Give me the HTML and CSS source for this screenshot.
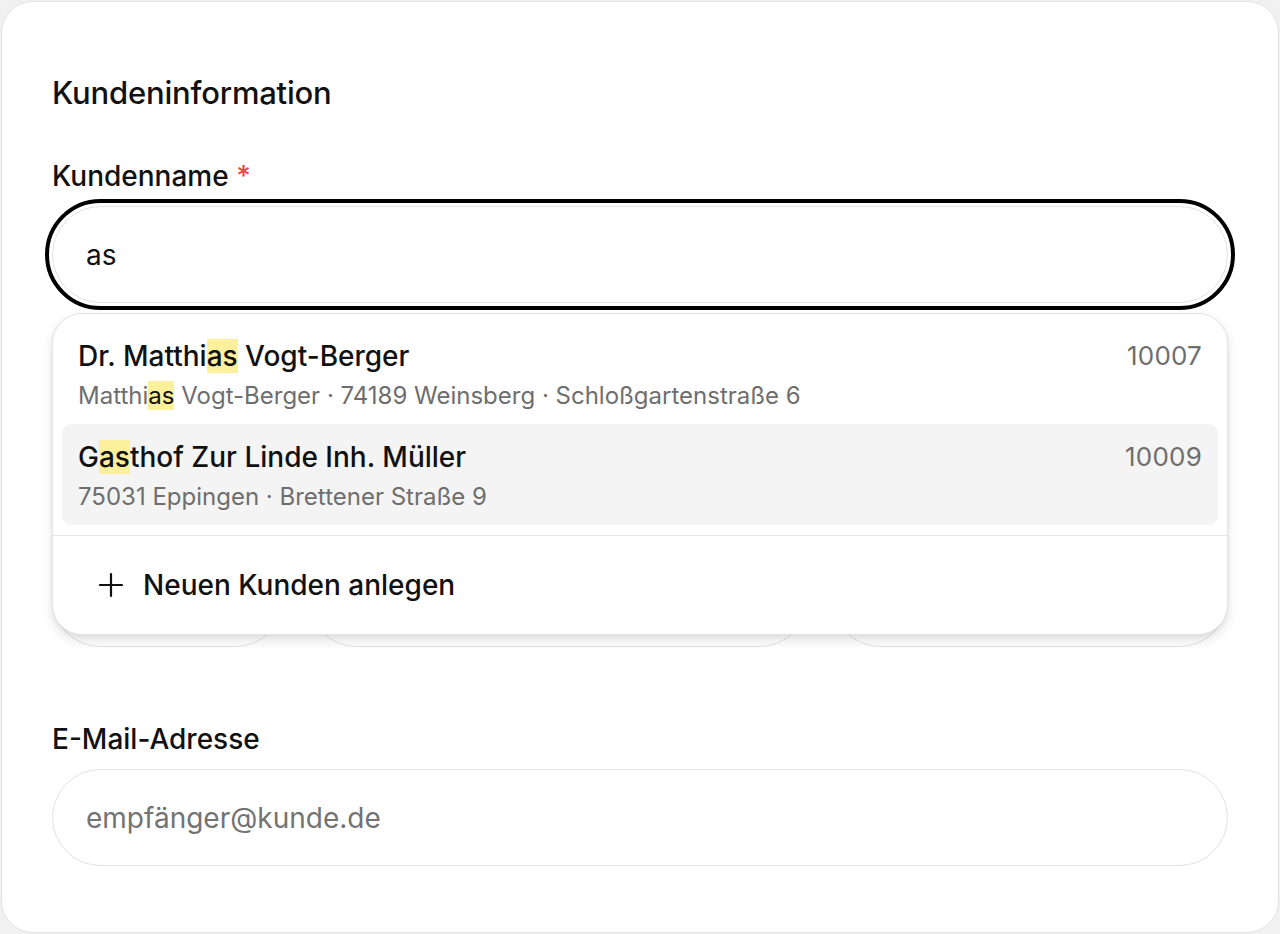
FILE: index.html
```html
<!DOCTYPE html>
<html lang="de">
<head>
<meta charset="utf-8">
<title>Kundeninformation</title>
<link rel="stylesheet" href="styles.css">
</head>
<body>
<div class="card">
  <h2 class="title">Kundeninformation</h2>

  <div class="field field-name">
    <label class="label">Kundenname <span class="req">*</span></label>
    <div class="input input-focus">as</div>

    <div class="dropdown">
      <div class="list">
        <div class="item">
          <div class="item-main">
            <div class="item-title">Dr. Matthi<mark>as</mark> Vogt-Berger</div>
            <div class="item-sub">Matthi<mark>as</mark> Vogt-Berger · 74189 Weinsberg · Schloßgartenstraße 6</div>
          </div>
          <div class="item-num">10007</div>
        </div>
        <div class="item item-active">
          <div class="item-main">
            <div class="item-title">G<mark>as</mark>thof Zur Linde Inh. Müller</div>
            <div class="item-sub">75031 Eppingen · Brettener Straße 9</div>
          </div>
          <div class="item-num">10009</div>
        </div>
      </div>
      <div class="dd-footer">
        <svg class="plus" width="26" height="26" viewBox="0 0 26 26" aria-hidden="true">
          <path d="M13 2v22M2 13h22" stroke="#111" stroke-width="2.2" fill="none" stroke-linecap="round"/>
        </svg>
        <span>Neuen Kunden anlegen</span>
      </div>
    </div>
  </div>

  <div class="row">
    <div class="field">
      <div class="label-space"></div>
      <div class="input"></div>
    </div>
    <div class="field">
      <div class="label-space"></div>
      <div class="input"></div>
    </div>
    <div class="field">
      <div class="label-space"></div>
      <div class="input"></div>
    </div>
  </div>

  <div class="field field-email">
    <label class="label">E-Mail-Adresse</label>
    <div class="input placeholder">empfänger@kunde.de</div>
  </div>
</div>
</body>
</html>
```

FILE: styles.css
```css
* { box-sizing: border-box; }

html, body {
  margin: 0;
  padding: 0;
}

body {
  background: #f1f1f1;
  padding: 1px;
  font-family: Inter, "Noto Sans", "Liberation Sans", sans-serif;
  color: #111;
}

.card {
  background: #fff;
  border: 1.5px solid #e3e3e3;
  border-radius: 32px;
  height: 932px;
  padding: 71px 50px 60px;
  display: flex;
  flex-direction: column;
}

.title {
  margin: 0;
  font-size: 31px;
  line-height: 40px;
  font-weight: 500;
  letter-spacing: -0.2px;
}

.field {
  display: flex;
  flex-direction: column;
  gap: 12px;
}

.field-name {
  position: relative;
  margin-top: 45px;
  z-index: 2;
}

.label {
  font-size: 28px;
  line-height: 36px;
  font-weight: 500;
}

.label-space {
  height: 36px;
}

.req {
  color: #ef4444;
}

.input {
  height: 97px;
  border: 1.5px solid #e2e2e2;
  border-radius: 999px;
  padding: 0 33px;
  display: flex;
  align-items: center;
  font-size: 28px;
  color: #111;
  background: #fff;
}

.input-focus {
  outline: 4px solid #000;
  outline-offset: 3px;
}

.placeholder {
  color: #737373;
}

.row {
  margin-top: 199px;
  display: grid;
  grid-template-columns: 232px 500px 1fr;
  gap: 24px;
}

.field-email {
  margin-top: 74px;
}

/* dropdown */
.dropdown {
  position: absolute;
  top: calc(100% + 10px);
  left: 0;
  right: 0;
  height: 322px;
  background: #fff;
  border: 1.5px solid #e4e4e4;
  border-radius: 30px;
  box-shadow: 0 6px 12px rgba(0, 0, 0, 0.10), 0 2px 4px rgba(0, 0, 0, 0.05);
  display: flex;
  flex-direction: column;
}

.list {
  padding: 9px 9px 10px;
  border-bottom: 1.5px solid #e6e6e6;
}

.item {
  display: flex;
  justify-content: space-between;
  align-items: flex-start;
  padding: 15px 16px 12px;
  border-radius: 10px;
  height: 101px;
}

.item-active {
  background: #f4f4f4;
}

.item-title {
  font-size: 28px;
  line-height: 36px;
  font-weight: 500;
  color: #111;
}

.item-sub {
  margin-top: 6px;
  font-size: 24px;
  line-height: 32px;
  color: #6e6e6e;
}

mark {
  background: #fdf09c;
  color: #111;
}

.item-num {
  font-size: 26px;
  line-height: 36px;
  color: #6e6e6e;
  letter-spacing: 0.2px;
}

.dd-footer {
  flex: 1;
  display: flex;
  align-items: center;
  gap: 19px;
  padding: 0 0 0 45px;
  font-size: 28px;
  font-weight: 500;
  color: #111;
}

.plus {
  display: block;
}
```
